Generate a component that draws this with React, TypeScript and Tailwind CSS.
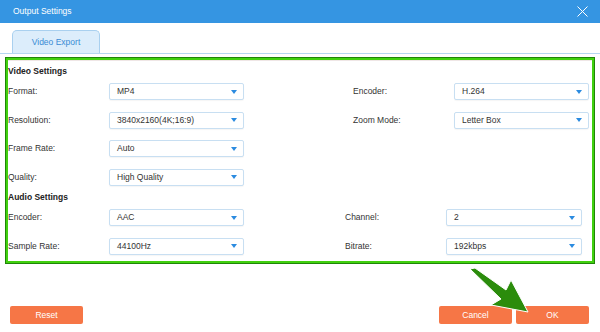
import React from 'react';

const font = { fontFamily: '"Liberation Sans", Arial, sans-serif' };

const Caret: React.FC = () => (
  <svg width="6" height="4" viewBox="0 0 6 4" className="shrink-0">
    <polygon points="0,0 6,0 3,4" fill="#2b8be0" />
  </svg>
);

const Select: React.FC<{ value: string; className?: string }> = ({ value, className = 'w-[135px]' }) => (
  <div
    className={`${className} h-[17px] flex items-center justify-between pl-[7px] pr-[6px] bg-white border border-[#c8dff2] rounded-[2px] shadow-[0_1px_1px_rgba(0,0,0,0.04)] text-[8.5px] text-[#333]`}
  >
    <span>{value}</span>
    <Caret />
  </div>
);

const Label: React.FC<{ text: string; className?: string }> = ({ text, className = 'w-[101px]' }) => (
  <div className={`${className} shrink-0 text-[8.5px] text-[#333]`}>{text}</div>
);

export default function App() {
  return (
    <div className="w-[600px] h-[332px] bg-white flex flex-col relative overflow-hidden" style={font}>
      {/* title bar */}
      <div className="h-[23px] bg-[#3595e2] flex items-center justify-between pl-[13px] pr-[12px] text-white">
        <span className="text-[8.5px]">Output Settings</span>
        <svg width="11" height="11" viewBox="0 0 11 11">
          <path d="M0.5 0.5 L10.5 10.5 M10.5 0.5 L0.5 10.5" stroke="#ffffff" strokeWidth="1" />
        </svg>
      </div>

      {/* tabs */}
      <div className="pt-[7px] pl-[12px] border-b border-[#b6d6f1]">
        <div className="w-[88px] h-[23px] bg-[#dcedfb] border border-b-0 border-[#a9d0ef] rounded-t-[5px] flex items-center justify-center text-[8.5px] text-[#3a8bd4]">
          Video Export
        </div>
      </div>

      {/* settings panel */}
      <div className="mt-[3px] ml-[5px] w-[590px] h-[207px] border border-[#1f8508]">
        <div className="w-full h-full border-2 border-[#41d00f]">
          <div className="w-full h-full border-t border-[#efe6e6] pt-[2px]">
            <div className="h-[16px] flex items-center text-[8.5px] font-bold text-[#222]">Video Settings</div>
            <div className="mt-[4px] flex flex-col gap-[11.5px]">
              <div className="flex items-center">
                <Label text="Format:" />
                <Select value="MP4" />
                <Label text="Encoder:" className="ml-[109px] w-[101px]" />
                <Select value="H.264" />
              </div>
              <div className="flex items-center">
                <Label text="Resolution:" />
                <Select value="3840x2160(4K;16:9)" />
                <Label text="Zoom Mode:" className="ml-[109px] w-[101px]" />
                <Select value="Letter Box" />
              </div>
              <div className="flex items-center">
                <Label text="Frame Rate:" />
                <Select value="Auto" />
              </div>
              <div className="flex items-center">
                <Label text="Quality:" />
                <Select value="High Quality" />
              </div>
            </div>
            <div className="mt-[3.5px] h-[16px] flex items-center text-[8.5px] font-bold text-[#222]">Audio Settings</div>
            <div className="mt-[4px] flex flex-col gap-[11.5px]">
              <div className="flex items-center">
                <Label text="Encoder:" />
                <Select value="AAC" />
                <Label text="Channel:" className="ml-[101px] w-[101px]" />
                <Select value="2" className="w-[136px]" />
              </div>
              <div className="flex items-center">
                <Label text="Sample Rate:" />
                <Select value="44100Hz" />
                <Label text="Bitrate:" className="ml-[101px] w-[101px]" />
                <Select value="192kbps" className="w-[136px]" />
              </div>
            </div>
          </div>
        </div>
      </div>

      {/* footer buttons */}
      <div className="flex-1 flex items-end justify-between pl-[10px] pr-[11px] pb-[8px]">
        <button className="w-[73px] h-[18px] bg-[#f67646] rounded-[2px] text-white text-[8.5px]">Reset</button>
        <div className="flex gap-[4px]">
          <button className="w-[73px] h-[18px] bg-[#f67646] rounded-[2px] text-white text-[8.5px]">Cancel</button>
          <button className="w-[73px] h-[18px] bg-[#f67646] rounded-[2px] text-white text-[8.5px]">OK</button>
        </div>
      </div>

      {/* green pointer arrow */}
      <svg className="absolute left-0 top-0 pointer-events-none" width="600" height="332" viewBox="0 0 600 332">
        <polygon
          points="470,269 475,268 506,290 511,280 528,312 491,305 501,299"
          fill="#2b8c0c"
          stroke="#ffffff"
          strokeWidth="1"
          strokeLinejoin="round"
        />
      </svg>
    </div>
  );
}
